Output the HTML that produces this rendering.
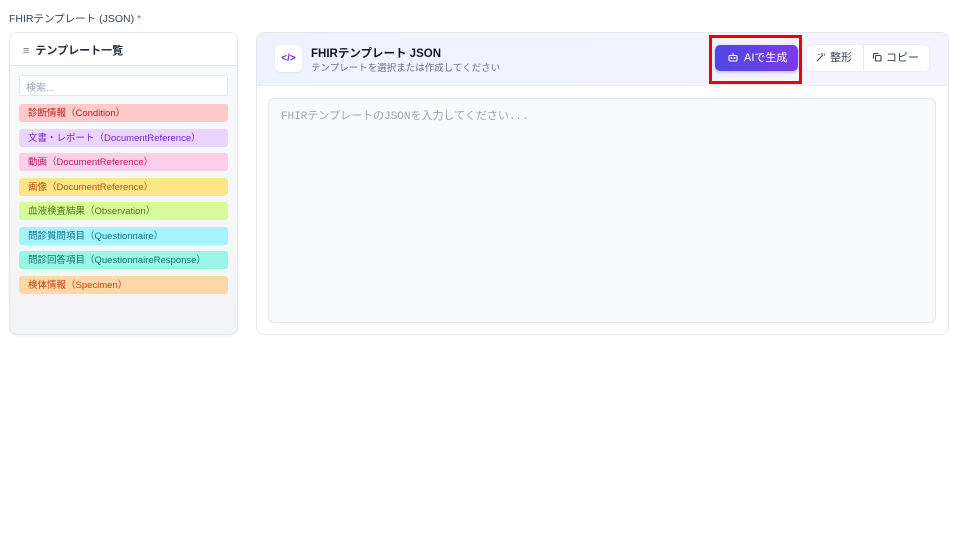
<!DOCTYPE html><html><head><meta charset="utf-8"><style>
*{box-sizing:border-box;margin:0;padding:0}
body{width:960px;height:540px;background:#fff;font-family:"Liberation Sans","Noto Sans CJK JP",sans-serif;position:relative;overflow:hidden;color:#111827}
.a{position:absolute}
.item{position:absolute;left:19px;width:209px;height:18px;border-radius:3px;font-size:9.5px;line-height:19px;padding-left:9px}
</style></head><body>
<div class="a" style="left:9px;top:11px;font-size:10.5px;color:#374151">FHIRテンプレート (JSON) <span style="color:#ef4444">*</span></div>
<div class="a" style="left:9px;top:32px;width:229px;height:303px;border:1px solid #e5e7eb;border-radius:8px;background:linear-gradient(#f9fafb,#f3f4f6);box-shadow:0 1px 2px rgba(0,0,0,.05);overflow:hidden">
 <div style="height:33px;background:#fff;border-bottom:1px solid #e5e7eb;padding:9px 0 0 13px;font-size:11px;font-weight:bold;color:#1f2937">
 <span style="color:#6b7280;font-weight:normal;margin-right:6px">≡</span>テンプレート一覧</div>
</div>
<div class="a" style="left:19px;top:75px;width:209px;height:21px;background:#fff;border:1px solid #e5e7eb;border-radius:3px;font-size:10px;color:#9ca3af;padding:3px 6px">検索...</div>
<div class="item" style="top:104px;background:#fecaca;color:#b91c1c">診断情報（Condition）</div>
<div class="item" style="top:129px;background:#e9d5ff;color:#7e22ce">文書・レポート（DocumentReference）</div>
<div class="item" style="top:153px;background:#fbcfe8;color:#be185d">動画（DocumentReference）</div>
<div class="item" style="top:178px;background:#fde68a;color:#b45309">画像（DocumentReference）</div>
<div class="item" style="top:202px;background:#d9f99d;color:#4d7c0f">血液検査結果（Observation）</div>
<div class="item" style="top:227px;background:#a5f3fc;color:#0e7490">問診質問項目（Questionnaire）</div>
<div class="item" style="top:251px;background:#99f6e4;color:#0f766e">問診回答項目（QuestionnaireResponse）</div>
<div class="item" style="top:276px;background:#fed7aa;color:#c2410c">検体情報（Specimen）</div>

<div class="a" style="left:256px;top:32px;width:693px;height:303px;border:1px solid #e5e7eb;border-radius:8px;background:#fff;overflow:hidden">
 <div style="height:53px;background:linear-gradient(90deg,#eef2ff,#f5f3ff);border-bottom:1px solid #eceef3"></div>
</div>
<div class="a" style="left:275px;top:45px;width:27px;height:27px;background:#fff;border-radius:6px;box-shadow:0 1px 2px rgba(0,0,0,.06);color:#6d28d9;font-size:10px;font-weight:bold;text-align:center;line-height:27px">&lt;/&gt;</div>
<div class="a" style="left:311px;top:45px;font-size:11.5px;font-weight:bold;color:#111827">FHIRテンプレート JSON</div>
<div class="a" style="left:311px;top:60px;font-size:9.5px;color:#6b7280">テンプレートを選択または作成してください</div>
<div class="a" style="left:709px;top:35px;width:93px;height:49px;border:3px solid #ef0000"></div>
<div class="a" style="left:715px;top:45px;width:83px;height:26px;border-radius:5px;background:linear-gradient(90deg,#4f46e5,#7c3aed);color:#fff;font-size:11px;line-height:26px;padding-left:13px;box-shadow:0 1px 3px rgba(79,70,229,.4)">
<svg width="10" height="10" viewBox="0 0 10 10" style="vertical-align:-1px;margin-right:6px" fill="none" stroke="#fff" stroke-width="1.1"><rect x="1" y="3.5" width="8" height="5.5" rx="1"/><path d="M5 1v2.5"/><circle cx="3.5" cy="6" r=".5"/><circle cx="6.5" cy="6" r=".5"/></svg>AIで生成</div>
<div class="a" style="left:807px;top:45px;width:122px;height:26px;border-radius:5px;background:#fff;box-shadow:0 0 0 1px #eceef3;font-size:11px;line-height:26px;color:#374151">
<span style="position:absolute;left:9px"><svg width="10" height="10" viewBox="0 0 10 10" style="vertical-align:-1px;margin-right:4px" fill="none" stroke="#374151" stroke-width="1.1"><path d="M1 9L7 3M6 1v2M8 3h1M8 1l.5.5M3 2v1M2.5 2.5h1"/></svg>整形</span><span style="position:absolute;left:56px;top:0;width:1px;height:26px;background:#e5e7eb"></span><span style="position:absolute;left:65px"><svg width="10" height="10" viewBox="0 0 10 10" style="vertical-align:-1px;margin-right:4px" fill="none" stroke="#374151" stroke-width="1.1"><rect x="3.5" y="3.5" width="5.5" height="5.5" rx="1"/><path d="M1.5 6.5V2a.5.5 0 0 1 .5-.5h4.5"/></svg>コピー</span></div>
<div class="a" style="left:268px;top:98px;width:668px;height:225px;border:1px solid #e5e7eb;border-radius:6px;background:#f9fafb;font-family:'Liberation Mono','Noto Sans CJK JP',monospace;font-size:11px;color:#9ca3af;padding:8px 12px">FHIRテンプレートのJSONを入力してください...</div>
</body></html>
